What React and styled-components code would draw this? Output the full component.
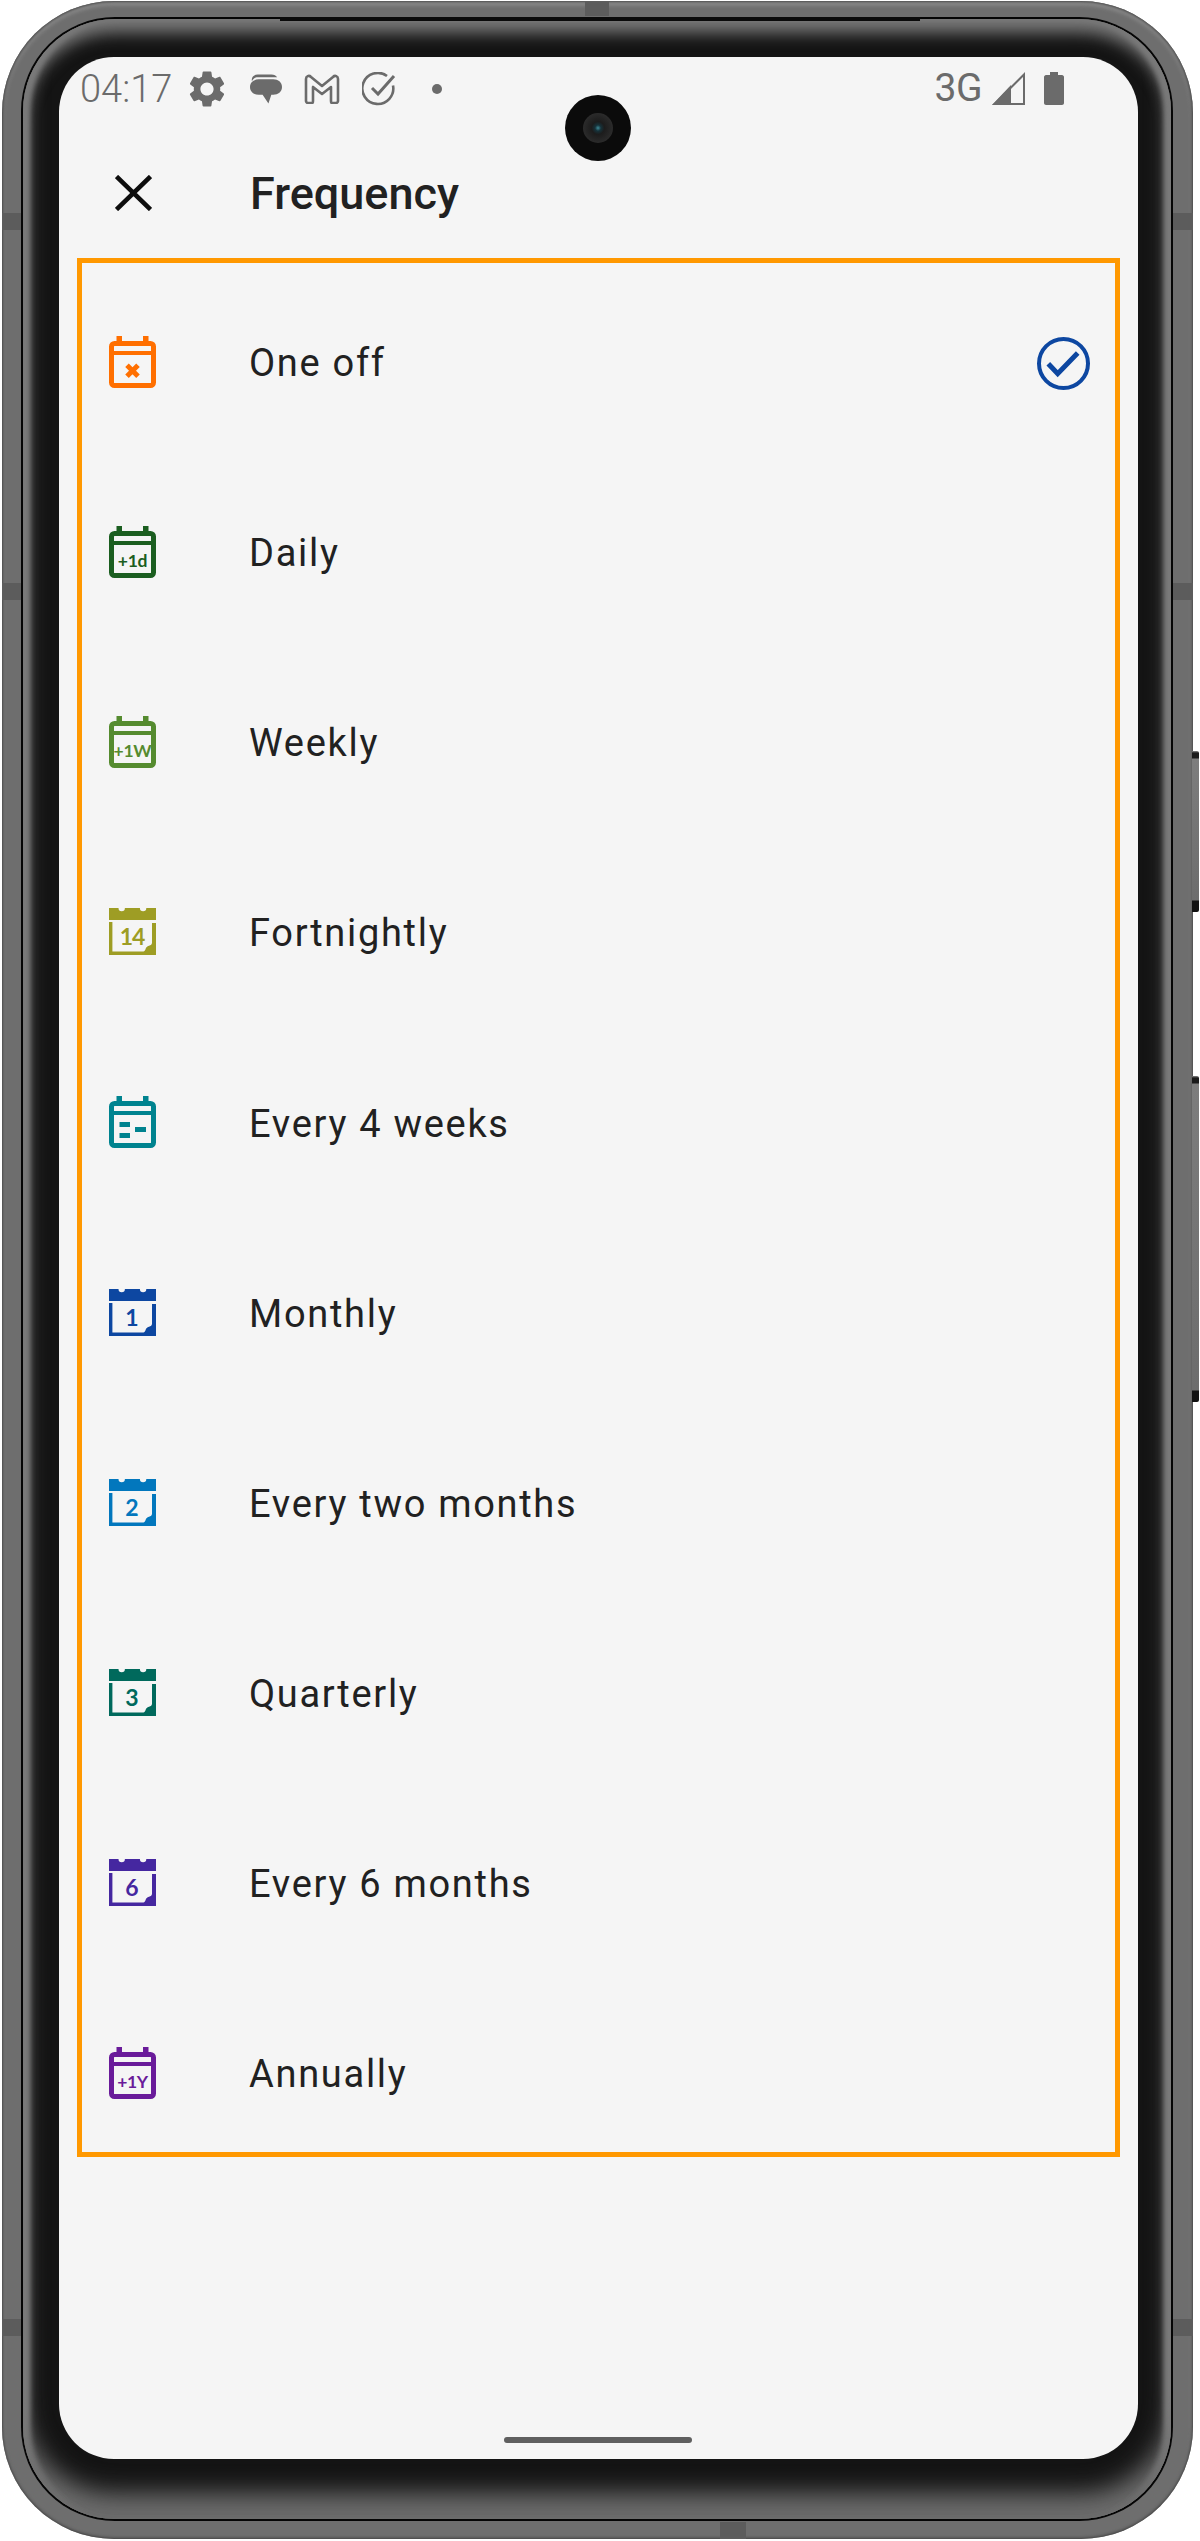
import React from "react"
import styled, { createGlobalStyle } from "styled-components"

const GlobalStyle = createGlobalStyle`
  html, body {
    margin: 0;
    padding: 0;
    background: #fff;
  }
  #root {
    width: 1200px;
    height: 2541px;
    overflow: hidden;
  }
`

const Phone = styled.div`
  position: relative;
  box-sizing: border-box;
  width: 1191px;
  height: 2538px;
  margin: 1px 0 0 2px;
  padding: 16px 20px 18px 19px;
  border-radius: 112px;
  background: #6e6e6e;
  box-shadow: inset 0 0 3px 1px #3e3e3e, inset 0 3px 5px #a0a0a0;
`

const Rim = styled.div`
  box-sizing: border-box;
  height: 100%;
  padding: 2px;
  border-radius: 94px;
  background: #050505;
`

const Bezel = styled.div`
  box-sizing: border-box;
  height: 100%;
  padding: 38px 33px 60px 36px;
  border-radius: 92px;
  background: #141414;
  box-shadow: inset 0 14px 16px #787878, inset 0 -26px 24px #6c6c6c,
    inset 7px 0 5px #888, inset -7px 0 5px #888;
`

const Screen = styled.div`
  position: relative;
  display: flex;
  flex-direction: column;
  box-sizing: border-box;
  height: 100%;
  border-radius: 55px;
  background: #f5f5f5;
  font-family: Roboto, "Liberation Sans", sans-serif;
  color: #212121;
`

const Band = styled.div`
  position: absolute;
  background: #5c5c5c;
  ${p => p.$side === "left" && `left: 0; width: 19px; top: ${p.$at}px; height: 17px;`}
  ${p => p.$side === "right" && `right: 0; width: 20px; top: ${p.$at}px; height: 17px;`}
  ${p => p.$side === "top" && `top: 0; height: 15px; left: ${p.$at}px; width: 24px;`}
  ${p => p.$side === "bottom" && `bottom: 0; height: 17px; left: ${p.$at}px; width: 26px;`}
`

const Groove = styled.div`
  position: absolute;
  top: 16px;
  left: 278px;
  width: 640px;
  height: 4px;
  background: #0a0a0a;
`

const SideButton = styled.div`
  position: absolute;
  left: 1190px;
  top: ${p => p.$top}px;
  width: 7px;
  height: ${p => p.$height}px;
  border-radius: 0 2px 2px 0;
  background: linear-gradient(#8a8a8a 0, #1a1a1a 2px, #1a1a1a 7px, #7d7d7d 8px, #6d6d6d calc(100% - 12px), #111 calc(100% - 11px));
`

const Camera = styled.div`
  position: absolute;
  left: 506px;
  top: 38px;
  display: flex;
  align-items: center;
  justify-content: center;
  width: 66px;
  height: 66px;
  border-radius: 50%;
  background: #0b0b0b;
`

const Lens = styled.div`
  width: 30px;
  height: 30px;
  border-radius: 50%;
  background: radial-gradient(circle, #3f8a96 0, #16323a 14%, #1c1c1c 30%, #2b2b2b 70%, #121212 100%);
`

const StatusBar = styled.div`
  display: flex;
  align-items: center;
  box-sizing: border-box;
  height: 63px;
  padding: 0 74px 0 21px;
  color: #6b6b6b;
`

const Time = styled.span`
  margin-right: 13px;
  font-size: 38px;
  font-weight: 300;
  line-height: 1;
`

const StatusIcons = styled.div`
  display: flex;
  align-items: center;
  flex: 1;
  gap: 22px;
`

const GearSlot = styled.span`
  display: flex;
  margin: 0 -1px 0 0;
`

const NetworkType = styled.span`
  margin-right: 10px;
  font-size: 39px;
  line-height: 1;
  letter-spacing: -0.5px;
`

const BatterySlot = styled.span`
  display: flex;
  margin-left: 19px;
`

const Dot = styled.span`
  width: 10px;
  height: 10px;
  margin-left: 13px;
  border-radius: 50%;
  background: #6b6b6b;
`

const Header = styled.header`
  display: flex;
  align-items: center;
  box-sizing: border-box;
  height: 138px;
  padding: 8px 0 0 56px;
`

const Title = styled.h1`
  margin: 0 0 0 98px;
  font-size: 45px;
  font-weight: 500;
  line-height: 1;
`

const Options = styled.div`
  display: flex;
  flex-direction: column;
  gap: 110.15px;
  margin: 0 18px;
  padding: 60px 24px 38px 27px;
  border: 5px solid #ff9800;
`

const Row = styled.div`
  display: flex;
  align-items: center;
  height: 80px;
`

const IconSlot = styled.div`
  display: flex;
  align-items: center;
  width: 47px;
  margin: 0 93px 3px 0;
`

const Label = styled.span`
  flex: 1;
  font-size: 38px;
  letter-spacing: 1.7px;
  line-height: 1;
`

const HomeBar = styled.div`
  position: absolute;
  left: 445px;
  bottom: 16px;
  width: 188px;
  height: 6px;
  border-radius: 3px;
  background: #5f5f5f;
`

const Gear = () => (
  <svg width="44" height="44" viewBox="0 0 24 24" fill="#6b6b6b">
    <path d="M19.14 12.94c.04-.3.06-.61.06-.94 0-.32-.02-.64-.07-.94l2.03-1.58c.18-.14.23-.41.12-.61l-1.92-3.32c-.12-.22-.37-.29-.59-.22l-2.39.96c-.5-.38-1.03-.7-1.62-.94l-.36-2.54c-.04-.24-.24-.41-.48-.41h-3.84c-.24 0-.43.17-.47.41l-.36 2.54c-.59.24-1.13.57-1.62.94l-2.39-.96c-.22-.08-.47 0-.59.22L2.74 8.87c-.12.21-.08.47.12.61l2.03 1.58c-.05.3-.09.63-.09.94s.02.64.07.94l-2.03 1.58c-.18.14-.23.41-.12.61l1.92 3.32c.12.22.37.29.59.22l2.39-.96c.5.38 1.03.7 1.62.94l.36 2.54c.05.24.24.41.48.41h3.84c.24 0 .44-.17.47-.41l.36-2.54c.59-.24 1.13-.56 1.62-.94l2.39.96c.22.08.47 0 .59-.22l1.92-3.32c.12-.22.07-.47-.12-.61l-2.01-1.58zM12 15.6c-1.98 0-3.6-1.62-3.6-3.6s1.62-3.6 3.6-3.6 3.6 1.62 3.6 3.6-1.62 3.6-3.6 3.6z" />
  </svg>
)

const Chat = () => (
  <svg width="32" height="32" viewBox="0 0 33 32" fill="#6b6b6b">
    <path d="M8 1h14c3 0 5 1 6 3H8C5 4 3 6 2 8 1 4 4 1 8 1z" />
    <path d="M9 6h15c5 0 9 3 9 8s-4 8-9 8h-2l-3 9-6-9H9c-5 0-9-3-9-8s4-8 9-8z" />
  </svg>
)

const Mail = () => (
  <svg width="36" height="30" viewBox="0 0 36 30" fill="none" stroke="#6b6b6b" strokeWidth="2.6" strokeLinejoin="round">
    <path d="M2 5c0-3 3-4 5-2l11 9 11-9c2-2 5-1 5 2v22c0 1-1 2-2 2h-4c-1 0-1-1-1-2V13l-9 7-9-7v14c0 1 0 2-1 2H4c-1 0-2-1-2-2z" />
  </svg>
)

const TaskCheck = () => (
  <svg width="35" height="34" viewBox="0 0 35 34" fill="none" stroke="#6b6b6b" strokeWidth="2.6">
    <path d="M31 13.5A15.5 15.5 0 1 1 25 4" />
    <path d="M10 16l6 6L32 4" strokeWidth="3" />
  </svg>
)

const Signal = () => (
  <svg width="33" height="33" viewBox="0 0 33 33">
    <path d="M32 2.5V32H2.5z" fill="none" stroke="#6b6b6b" strokeWidth="2" />
    <path d="M19 13v20H0z" fill="#6b6b6b" />
  </svg>
)

const Battery = () => (
  <svg width="20" height="33" viewBox="0 0 20 33" fill="#6b6b6b">
    <path d="M6 0h8v3h4c1 0 2 1 2 2v26c0 1-1 2-2 2H2c-1 0-2-1-2-2V5c0-1 1-2 2-2h4z" />
  </svg>
)

const Close = () => (
  <svg width="37" height="36" viewBox="0 0 37 36" stroke="#0d0d0d" strokeWidth="4.6" fill="none">
    <path d="M1.5 1.5l34 33M35.5 1.5l-34 33" />
  </svg>
)

const Selected = () => (
  <svg width="54" height="53" viewBox="0 0 54 53" fill="none" stroke="#0d47a1">
    <circle cx="26.5" cy="26.5" r="24.5" strokeWidth="4" />
    <path d="M11.3 26.7l9.4 10L40.7 16" strokeWidth="5" />
  </svg>
)

// outlined calendar, the +1d / +1W / +1Y ones
const OutlineCalendar = ({ color, text, children }) => (
  <svg width="47" height="52" viewBox="0 0 47 52">
    <rect x="7.5" y="0" width="5.5" height="9" fill={color} />
    <rect x="34" y="0" width="5.5" height="9" fill={color} />
    <rect x="2.5" y="7.5" width="42" height="42" rx="3" fill="none" stroke={color} strokeWidth="5" />
    <rect x="2" y="15" width="43" height="4" fill={color} />
    {text && (
      <text x="23.5" y="41" textAnchor="middle" fill={color} fontFamily="Lato, sans-serif" fontSize="17.5" fontWeight="700" letterSpacing="-0.3">
        {text}
      </text>
    )}
    {children}
  </svg>
)

// tear off calendar with the folded corner
const LeafCalendar = ({ color, text, letterSpacing = 0 }) => (
  <svg width="47" height="47" viewBox="0 0 47 47">
    <path fill={color} d="M0 0h9.5a3.2 3.2 0 0 0 6.4 0h15a3.2 3.2 0 0 0 6.4 0H47v12H0z" />
    <path fill={color} d="M0 14h3.4v29.4h31c1 0 1.6-.7 2-1.8.7-2.2 1.7-3.3 3.6-3.8 1.8-.5 3-1.3 3-3V15H47v32H0z" />
    <text x="23" y="36.5" textAnchor="middle" fill={color} fontFamily="Lato, sans-serif" fontSize="23" fontWeight="700" letterSpacing={letterSpacing}>
      {text}
    </text>
  </svg>
)

const options = [
  {
    label: "One off",
    icon: (
      <OutlineCalendar color="#ff6f00">
        <path d="M18 29.2l11 11M29 29.2l-11 11" stroke="#ff6f00" strokeWidth="5" />
      </OutlineCalendar>
    ),
    selected: true,
  },
  { label: "Daily", icon: <OutlineCalendar color="#1b5e20" text="+1d" /> },
  { label: "Weekly", icon: <OutlineCalendar color="#558b2f" text="+1W" /> },
  { label: "Fortnightly", icon: <LeafCalendar color="#9e9d24" text="14" letterSpacing={-1} /> },
  {
    label: "Every 4 weeks",
    icon: (
      <OutlineCalendar color="#00838f">
        <path d="M10.5 26H21v5H10.5zM10.5 37H21v5H10.5zM26 31h11v5H26z" fill="#00838f" />
      </OutlineCalendar>
    ),
  },
  { label: "Monthly", icon: <LeafCalendar color="#0d47a1" text="1" /> },
  { label: "Every two months", icon: <LeafCalendar color="#0277bd" text="2" /> },
  { label: "Quarterly", icon: <LeafCalendar color="#00695c" text="3" /> },
  { label: "Every 6 months", icon: <LeafCalendar color="#4527a0" text="6" /> },
  { label: "Annually", icon: <OutlineCalendar color="#6a1b9a" text="+1Y" /> },
]

export default function App() {
  return (
    <>
      <GlobalStyle />
      <Phone>
        <Groove />
        <Band $side="top" $at={583} />
        <Band $side="bottom" $at={718} />
        <Band $side="left" $at={212} />
        <Band $side="left" $at={582} />
        <Band $side="left" $at={2318} />
        <Band $side="right" $at={212} />
        <Band $side="right" $at={582} />
        <Band $side="right" $at={2318} />
        <SideButton $top={750} $height={161} />
        <SideButton $top={1075} $height={326} />
        <Rim>
          <Bezel>
            <Screen>
              <Camera>
                <Lens />
              </Camera>
              <StatusBar>
                <Time>04:17</Time>
                <StatusIcons>
                  <GearSlot>
                    <Gear />
                  </GearSlot>
                  <Chat />
                  <Mail />
                  <TaskCheck />
                  <Dot />
                </StatusIcons>
                <NetworkType>3G</NetworkType>
                <Signal />
                <BatterySlot>
                  <Battery />
                </BatterySlot>
              </StatusBar>
              <Header>
                <Close />
                <Title>Frequency</Title>
              </Header>
              <Options>
                {options.map(o => (
                  <Row key={o.label}>
                    <IconSlot>{o.icon}</IconSlot>
                    <Label>{o.label}</Label>
                    {o.selected && <Selected />}
                  </Row>
                ))}
              </Options>
              <HomeBar />
            </Screen>
          </Bezel>
        </Rim>
      </Phone>
    </>
  )
}
